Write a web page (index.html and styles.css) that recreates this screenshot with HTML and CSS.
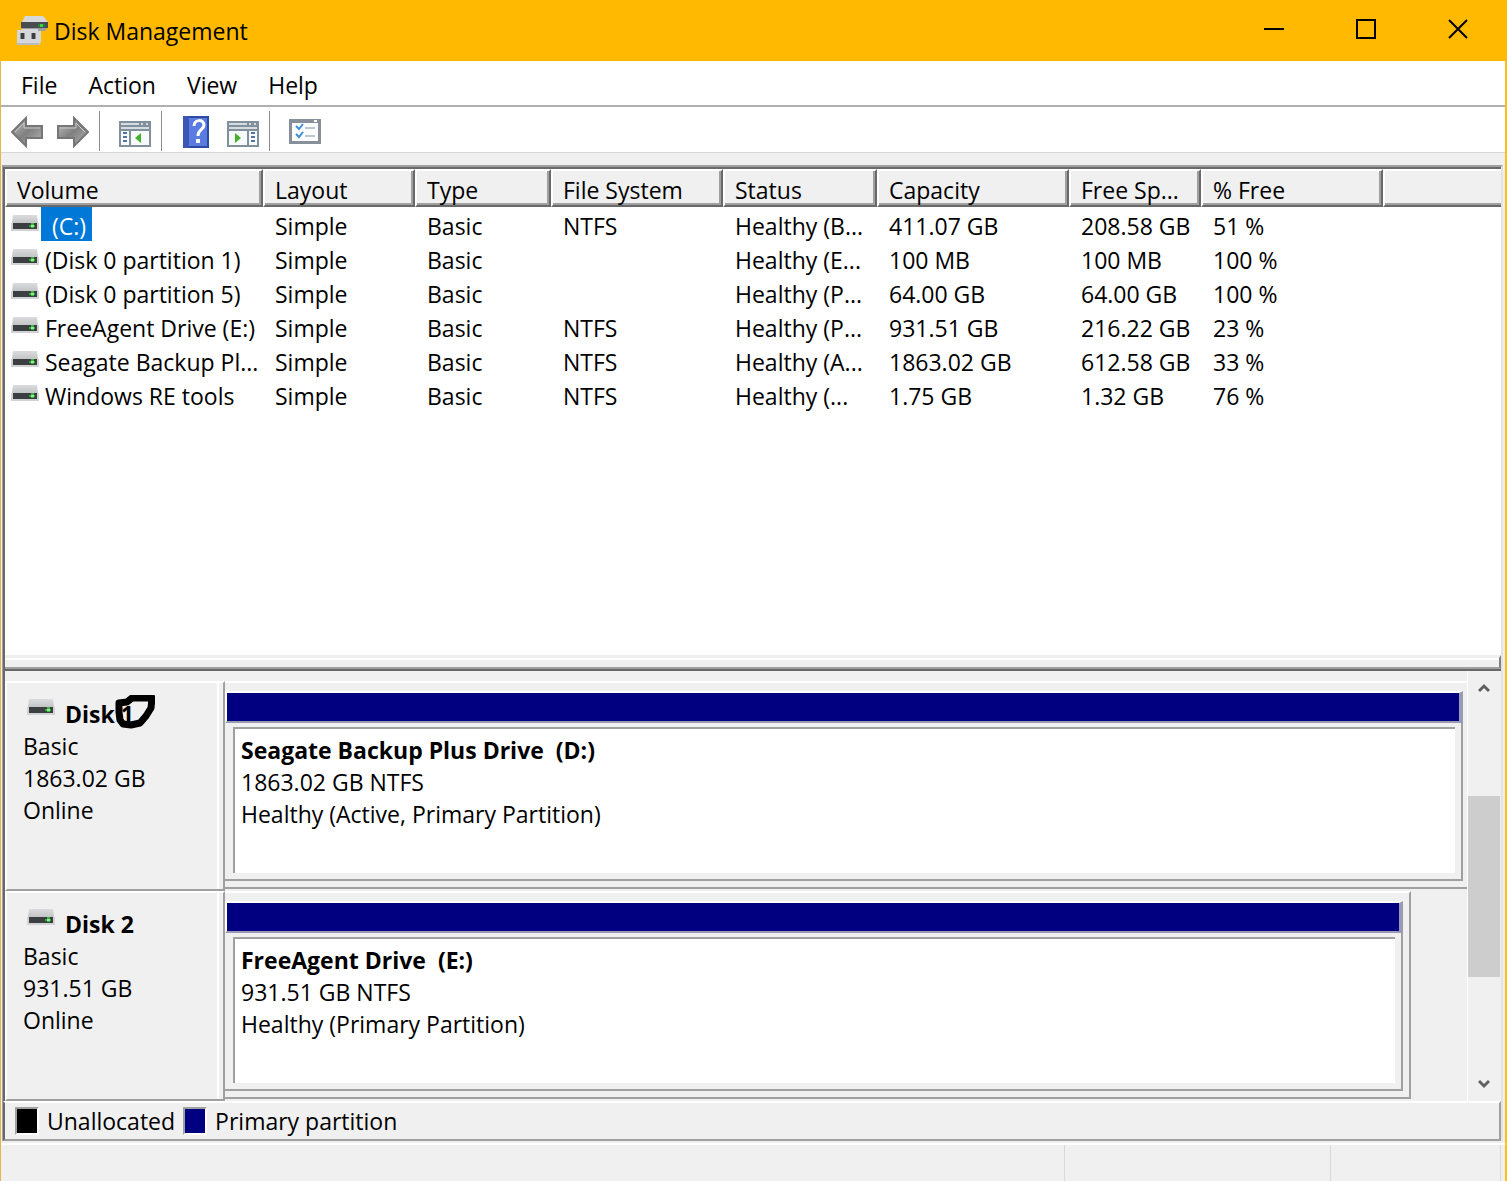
FILE: index.html
```html
<!DOCTYPE html>
<html lang="en">
<head>
    <meta charset="UTF-8">
    <meta name="viewport" content="width=device-width, initial-scale=1.0">
    <title>Disk Management</title>
    <link rel="stylesheet" href="styles.css">
</head>
<body>
    <!-- shared drive icon -->
    <svg class="defs" aria-hidden="true">
        <defs>
            <linearGradient id="lid" x1="0" y1="0" x2="0" y2="1">
                <stop offset="0" stop-color="#dcdcde"/>
                <stop offset="1" stop-color="#c2c4c6"/>
            </linearGradient>
            <linearGradient id="metal" x1="0" y1="0" x2="1" y2="1">
                <stop offset="0" stop-color="#c4c4c4"/>
                <stop offset="0.5" stop-color="#808080"/>
                <stop offset="1" stop-color="#b4b4b4"/>
            </linearGradient>
            <symbol id="drive" viewBox="0 0 28 18">
                <path d="M2 0h24l1 8H1z" fill="url(#lid)"/>
                <path d="M0 8h28v8H0z" fill="#d0d2d4"/>
                <path d="M2 8h24v6H2z" fill="#3c3f42"/>
                <path d="M18 10h6v2h-6z" fill="#2fa336"/>
                <path d="M20 8h3v5h-3z" fill="#36b43d"/>
                <path d="M20 10h3v2h-3z" fill="#8cf08c"/>
            </symbol>
        </defs>
    </svg>

    <header class="titlebar">
        <svg class="app-icon" viewBox="0 0 32 32" aria-hidden="true">
            <path d="M9 1h18l5 6H6z" fill="#d8d8d8"/>
            <path d="M5 7h27v6H5z" fill="#4a4d50"/>
            <path d="M6 13h25l-2 3H6z" fill="#9b9d9f"/>
            <path d="M22 9h7v3h-7z" fill="#2f7a38"/>
            <path d="M24 9h3v3h-3z" fill="#3fce4a"/>
            <path d="M1 15h5v-1h16v2h3v11l-2 3H1z" fill="#d5d7da"/>
            <path d="M1 28h22v2H1z" fill="#b9bcc2"/>
            <path d="M4 18h5v6H4zM15 18h5v6h-5z" fill="#8e9093"/>
            <path d="M5 18h3v6H5zM16 18h3v6h-3z" fill="#3b3d40"/>
        </svg>
        <h1>Disk Management</h1>
        <div class="window-buttons">
            <button type="button" aria-label="Minimize"><svg viewBox="0 0 20 20"><path d="M0 10h20"/></svg></button>
            <button type="button" aria-label="Maximize"><svg viewBox="0 0 20 20"><path d="M1 1h18v18H1z"/></svg></button>
            <button type="button" aria-label="Close"><svg viewBox="0 0 20 20"><path d="M1 1l18 18M19 1L1 19"/></svg></button>
        </div>
    </header>

    <div class="window">
        <nav class="menu">
            <button type="button">File</button>
            <button type="button">Action</button>
            <button type="button">View</button>
            <button type="button">Help</button>
        </nav>

        <div class="toolbar">
            <div class="group">
                <button type="button" aria-label="Back">
                    <svg viewBox="0 0 32 32"><path d="M1 16L15 2v8h16v12H15v8z" fill="url(#metal)" stroke="#767676" stroke-width="2"/><path d="M4 16L13 7v5h16" fill="none" stroke="#c8c8c8"/></svg>
                </button>
                <button type="button" aria-label="Forward">
                    <svg viewBox="0 0 32 32"><path d="M31 16L17 2v8H1v12h16v8z" fill="url(#metal)" stroke="#767676" stroke-width="2"/><path d="M28 16L19 7v5H3" fill="none" stroke="#c8c8c8"/></svg>
                </button>
            </div>
            <div class="group">
                <button type="button" aria-label="Show console tree">
                    <svg viewBox="0 0 32 32">
                        <path d="M0 5h32v26H0z" fill="#82909b"/>
                        <path d="M2 7h18v2H2zM22 7h2v2h-2zM27 7h2v2h-2zM2 11h28v2H2z" fill="#d5dce1"/>
                        <path d="M2 15h8v14H2zM12 15h18v14H12z" fill="#f7fafb"/>
                        <path d="M4 17h4M4 21h4M4 25h4" stroke="#5272a8" stroke-width="2"/>
                        <path d="M22 17v10l-6-5z" fill="#44b02c"/>
                    </svg>
                </button>
            </div>
            <div class="group">
                <button type="button" aria-label="Help topics">
                    <svg viewBox="0 0 32 32">
                        <path d="M2 0h26v32H2z" fill="#2e49a0"/>
                        <path d="M8 2h18v28H8z" fill="#5a7ce0"/>
                        <path d="M2 0h6v32H2z" fill="#3c56b4"/>
                        <path d="M13 10c0-7 10-7 10-1 0 5-6 4-6 11" fill="none" stroke="#fff" stroke-width="3"/>
                        <path d="M15 23h4v4h-4z" fill="#fff"/>
                    </svg>
                </button>
                <button type="button" aria-label="Show action pane">
                    <svg viewBox="0 0 32 32">
                        <path d="M0 5h32v26H0z" fill="#82909b"/>
                        <path d="M2 7h18v2H2zM22 7h2v2h-2zM27 7h2v2h-2zM2 11h28v2H2z" fill="#d5dce1"/>
                        <path d="M2 15h18v14H2zM22 15h8v14h-8z" fill="#f7fafb"/>
                        <path d="M24 17h4M24 21h4M24 25h4" stroke="#5272a8" stroke-width="2"/>
                        <path d="M8 17v10l6-5z" fill="#44b02c"/>
                    </svg>
                </button>
            </div>
            <div class="group">
                <button type="button" aria-label="Settings">
                    <svg viewBox="0 0 32 32">
                        <path d="M0 3h32v25H0z" fill="#87909a"/>
                        <path d="M3 7h26v18H3z" fill="#fbfcfc"/>
                        <path d="M25 4h3v2h-3z" fill="#fff"/>
                        <path d="M7 10l3 3 4-5M7 18l3 3 4-5" fill="none" stroke="#3d8ed8" stroke-width="2"/>
                        <path d="M16 12h10M16 20h10" stroke="#bcc6ce" stroke-width="2"/>
                    </svg>
                </button>
            </div>
        </div>

        <main class="panes">
            <section class="volume-list">
                <table>
                    <colgroup>
                        <col class="c-volume"><col class="c-layout"><col class="c-type"><col class="c-fs"><col class="c-status"><col class="c-capacity"><col class="c-space"><col class="c-free"><col>
                    </colgroup>
                    <thead>
                        <tr><th>Volume</th><th>Layout</th><th>Type</th><th>File System</th><th>Status</th><th>Capacity</th><th>Free Sp...</th><th>% Free</th><th></th></tr>
                    </thead>
                    <tbody>
                        <tr><td><svg class="drive"><use href="#drive"/></svg><span class="name selected">(C:)</span></td><td>Simple</td><td>Basic</td><td>NTFS</td><td>Healthy (B...</td><td>411.07 GB</td><td>208.58 GB</td><td>51 %</td><td></td></tr>
                        <tr><td><svg class="drive"><use href="#drive"/></svg><span class="name">(Disk 0 partition 1)</span></td><td>Simple</td><td>Basic</td><td></td><td>Healthy (E...</td><td>100 MB</td><td>100 MB</td><td>100 %</td><td></td></tr>
                        <tr><td><svg class="drive"><use href="#drive"/></svg><span class="name">(Disk 0 partition 5)</span></td><td>Simple</td><td>Basic</td><td></td><td>Healthy (P...</td><td>64.00 GB</td><td>64.00 GB</td><td>100 %</td><td></td></tr>
                        <tr><td><svg class="drive"><use href="#drive"/></svg><span class="name">FreeAgent Drive (E:)</span></td><td>Simple</td><td>Basic</td><td>NTFS</td><td>Healthy (P...</td><td>931.51 GB</td><td>216.22 GB</td><td>23 %</td><td></td></tr>
                        <tr><td><svg class="drive"><use href="#drive"/></svg><span class="name">Seagate Backup Pl...</span></td><td>Simple</td><td>Basic</td><td>NTFS</td><td>Healthy (A...</td><td>1863.02 GB</td><td>612.58 GB</td><td>33 %</td><td></td></tr>
                        <tr><td><svg class="drive"><use href="#drive"/></svg><span class="name">Windows RE tools</span></td><td>Simple</td><td>Basic</td><td>NTFS</td><td>Healthy (...</td><td>1.75 GB</td><td>1.32 GB</td><td>76 %</td><td></td></tr>
                    </tbody>
                </table>
                <div class="splitter"></div>
            </section>

            <section class="disks">
                <div class="disk-rows">
                    <div class="disk">
                        <div class="disk-label">
                            <h2><svg class="drive"><use href="#drive"/></svg><span>Disk <span class="marked">1<svg class="scribble" viewBox="0 0 40 34"><path d="M4 8l8-1 5-4h20l-1 10-5 8-6 7-9 2-8-1-3-4-1-8z" fill="none" stroke="#000" stroke-width="7" stroke-linejoin="round"/></svg></span></span></h2>
                            <p>Basic</p>
                            <p>1863.02 GB</p>
                            <p>Online</p>
                        </div>
                        <div class="graph">
                            <div class="volume">
                                <div class="bar"></div>
                                <div class="volume-info">
                                    <h3>Seagate Backup Plus Drive&nbsp; (D:)</h3>
                                    <p>1863.02 GB NTFS</p>
                                    <p>Healthy (Active, Primary Partition)</p>
                                </div>
                            </div>
                        </div>
                    </div>
                    <div class="disk">
                        <div class="disk-label">
                            <h2><svg class="drive"><use href="#drive"/></svg><span>Disk 2</span></h2>
                            <p>Basic</p>
                            <p>931.51 GB</p>
                            <p>Online</p>
                        </div>
                        <div class="graph short">
                            <div class="volume">
                                <div class="bar"></div>
                                <div class="volume-info">
                                    <h3>FreeAgent Drive&nbsp; (E:)</h3>
                                    <p>931.51 GB NTFS</p>
                                    <p>Healthy (Primary Partition)</p>
                                </div>
                            </div>
                        </div>
                    </div>
                </div>
                <div class="scrollbar">
                    <button type="button" aria-label="Scroll up"><svg viewBox="0 0 12 10"><path d="M1 8l5-5 5 5"/></svg></button>
                    <div class="track"><div class="thumb"></div></div>
                    <button type="button" aria-label="Scroll down"><svg viewBox="0 0 12 10"><path d="M1 2l5 5 5-5"/></svg></button>
                </div>
            </section>

            <div class="legend">
                <span class="swatch unallocated"></span><span>Unallocated</span>
                <span class="swatch primary"></span><span>Primary partition</span>
            </div>
        </main>

        <footer class="statusbar"><div></div><div></div><div></div></footer>
    </div>
</body>
</html>
```
FILE: styles.css
```css
* {
    box-sizing: border-box;
}

body {
    margin: 0;
    min-height: 100vh;
    display: flex;
    flex-direction: column;
    background-color: #f0f0f0;
    color: #000;
    font-family: "Open Sans", "Noto Sans", sans-serif;
    font-size: 23px;
    line-height: 32px;
}

h1, h2, h3, p {
    margin: 0;
    font-size: 23px;
    font-weight: normal;
}

button {
    padding: 0;
    border: none;
    background: none;
    color: inherit;
    font: inherit;
}

svg {
    display: block;
}

.defs {
    position: absolute;
    width: 0;
    height: 0;
}

.titlebar {
    display: flex;
    align-items: center;
    height: 61px;
    padding-left: 16px;
    background-color: #ffb900;
}

.app-icon {
    width: 32px;
    height: 32px;
    margin-right: 6px;
}

.window-buttons {
    display: flex;
    align-self: flex-start;
    margin-left: auto;
    padding-right: 3px;
}

.window-buttons button {
    width: 92px;
    height: 58px;
    display: flex;
    align-items: center;
    justify-content: center;
}

.window-buttons svg {
    width: 20px;
    height: 20px;
    fill: none;
    stroke: #000;
    stroke-width: 2;
}

.window {
    flex: 1;
    display: flex;
    flex-direction: column;
    border-left: 1px solid #e0b84a;
    border-right: 2px solid #fdc010;
}

.menu {
    display: flex;
    gap: 31px;
    height: 46px;
    padding: 8px 20px 4px;
    background-color: #fff;
    border-bottom: 2px solid #b0b0b0;
}

.toolbar {
    display: flex;
    height: 46px;
    padding: 4px 10px 1px;
    background-color: #fff;
    border-bottom: 1px solid #d8d8d8;
}

.group {
    display: flex;
    align-items: flex-start;
    gap: 14px;
    padding: 5px 10px 0 19px;
    border-right: 1px solid #8c8c8c;
}

.group:first-child {
    padding-left: 0;
}

.group:last-child {
    border-right: none;
}

.toolbar svg {
    width: 32px;
    height: 32px;
}

.panes {
    flex: 1;
    display: flex;
    flex-direction: column;
    margin: 12px 2px 0 1px;
    border-top: 2px solid #a0a0a0;
    border-left: 1px solid #a0a0a0;
    border-right: 2px solid #e3e3e3;
}

.volume-list {
    flex: 1;
    display: flex;
    flex-direction: column;
    justify-content: space-between;
    background-color: #fff;
    border-top: 2px solid #696969;
    border-left: 2px solid #696969;
    border-bottom: 2px solid #696969;
}

table {
    width: 100%;
    table-layout: fixed;
    border-collapse: separate;
    border-spacing: 0;
}

.c-volume { width: 258px; }
.c-layout { width: 152px; }
.c-type { width: 136px; }
.c-fs { width: 172px; }
.c-status { width: 154px; }
.c-capacity { width: 192px; }
.c-space { width: 132px; }
.c-free { width: 182px; }

th {
    height: 38px;
    padding: 4px 0 0 10px;
    background-color: #f0f0f0;
    border-top: 2px solid #fff;
    border-left: 2px solid #fff;
    border-right: 2px solid #696969;
    border-bottom: 2px solid #696969;
    box-shadow: inset -2px -2px #a0a0a0;
    font-weight: normal;
    text-align: left;
    line-height: 30px;
    white-space: nowrap;
}

th:last-child {
    border-right: none;
    box-shadow: inset 0 -2px #a0a0a0;
}

td {
    height: 34px;
    padding: 4px 0 0 12px;
    line-height: 30px;
    white-space: nowrap;
}

td:first-child {
    display: flex;
    align-items: stretch;
    padding: 0 0 0 6px;
}

.drive {
    flex: none;
    width: 28px;
    height: 18px;
}

td .drive {
    margin: 8px 2px 0 0;
}

.name {
    padding: 4px 4px 0;
}

.selected {
    padding: 4px 6px 0 11px;
    background-color: #0078d7;
    color: #fff;
}

.splitter {
    height: 14px;
    border-top: 3px solid #efefef;
    border-bottom: 2px solid #a0a0a0;
    border-right: 2px solid #808080;
    background-color: #f0f0f0;
    box-shadow: inset 0 2px #fff;
}

.disks {
    display: flex;
    border-left: 2px solid #696969;
}

.disk-rows {
    flex: 1;
    padding-top: 10px;
}

.disk {
    display: flex;
    height: 210px;
}

.disk-label {
    width: 220px;
    padding: 15px 0 0 16px;
    border-top: 2px solid #fff;
    border-left: 2px solid #fff;
    border-bottom: 2px solid #a0a0a0;
    border-right: 2px solid #a0a0a0;
    box-shadow: inset -4px 0 #f0f0f0, inset -6px 0 #fff;
}

h2 {
    display: flex;
    gap: 10px;
    font-weight: bold;
}

h2 .drive {
    margin: 1px 0 0 4px;
}

.marked {
    position: relative;
}

/* pen mark drawn around the disk number */
.scribble {
    position: absolute;
    left: -6px;
    top: -3px;
    width: 40px;
    height: 34px;
}

.graph {
    flex: 1;
    display: flex;
    margin-bottom: 2px;
    padding: 8px 4px 6px 0;
    border-top: 2px solid #fff;
    border-bottom: 2px solid #a0a0a0;
}

.short {
    margin-right: 56px;
    padding-right: 6px;
    border-right: 2px solid #a0a0a0;
}

.volume {
    flex: 1;
    display: flex;
    flex-direction: column;
    border-right: 2px solid #a0a0a0;
    border-bottom: 2px solid #a0a0a0;
}

.bar {
    height: 32px;
    margin-right: -2px;
    background-color: #000080;
    border: 2px solid #9a9ab4;
    border-left-color: #fff;
    border-top-color: #fff;
    border-right-width: 4px;
}

.volume-info {
    flex: 1;
    margin: 4px 6px 6px 8px;
    padding: 5px 6px;
    background-color: #fff;
    border-top: 2px solid #a0a0a0;
    border-left: 2px solid #a0a0a0;
}

h3 {
    font-weight: bold;
}

.scrollbar {
    width: 34px;
    display: flex;
    flex-direction: column;
    padding-right: 1px;
    border-left: 1px solid #fff;
}

.scrollbar button {
    height: 34px;
    display: flex;
    align-items: center;
    justify-content: center;
}

.scrollbar svg {
    width: 12px;
    height: 10px;
    fill: none;
    stroke: #606060;
    stroke-width: 3;
}

.track {
    flex: 1;
    display: flex;
    align-items: center;
}

.thumb {
    width: 100%;
    height: 50%;
    background-color: #cdcdcd;
}

.legend {
    display: flex;
    align-items: center;
    gap: 8px;
    height: 40px;
    padding-left: 10px;
    border-top: 2px solid #fff;
    border-left: 2px solid #696969;
    border-right: 2px solid #a0a0a0;
    border-bottom: 2px solid #a0a0a0;
}

.swatch {
    width: 24px;
    height: 28px;
    border: 2px solid #fff;
    border-top-color: #a0a0a0;
    border-left-color: #a0a0a0;
}

.unallocated {
    background-color: #000;
}

.primary {
    background-color: #000080;
}

.statusbar {
    display: flex;
    height: 38px;
    margin-top: 2px;
    padding-right: 4px;
    border-top: 2px solid #fff;
}

.statusbar div {
    width: 266px;
    border-right: 1px solid #d8d8d8;
}

.statusbar div:first-child {
    flex: 1;
}

.statusbar div:last-child {
    width: 170px;
}
```
